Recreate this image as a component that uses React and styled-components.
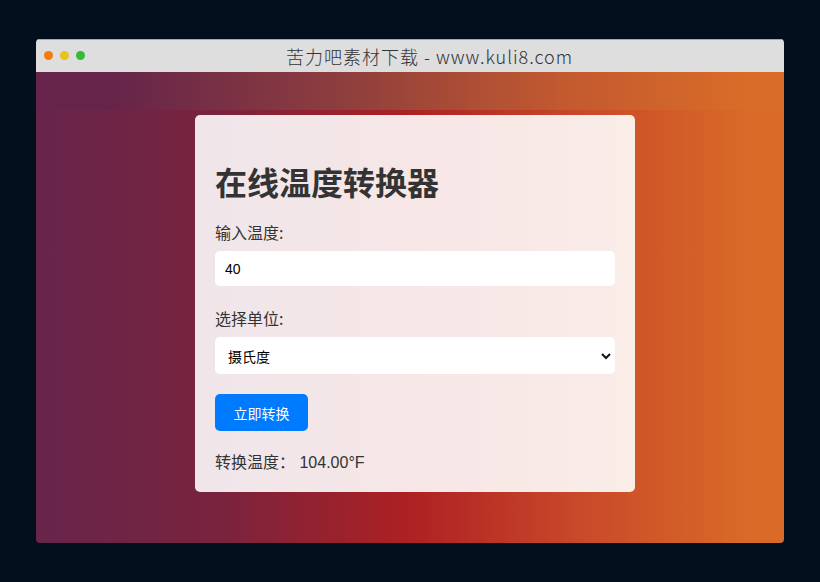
import React, { useState } from "react";
import styled, { createGlobalStyle } from "styled-components";

const GlobalStyle = createGlobalStyle`
  html, body {
    margin: 0;
    padding: 0;
    background: #030f1d;
  }
  body {
    width: 820px;
    height: 582px;
    overflow: hidden;
  }
`;

const Page = styled.div`
  padding: 39px 36px 0 36px;
`;

const Window = styled.div`
  display: flex;
  flex-direction: column;
  width: 748px;
  height: 504px;
  border-radius: 4px;
  overflow: hidden;
`;

const TitleBar = styled.div`
  position: relative;
  display: flex;
  align-items: center;
  justify-content: center;
  height: 33px;
  padding-left: 39px;
  background: #dedede;
  border-top: 1px solid #a5a9ae;
  box-sizing: border-box;
`;

const Dots = styled.div`
  position: absolute;
  left: 8px;
  top: 11px;
  display: flex;
  gap: 7px;
`;

const Dot = styled.span`
  width: 9px;
  height: 9px;
  border-radius: 50%;
  background: ${(props) => props.color};
`;

const TitleText = styled.div`
  font-family: "Noto Sans CJK SC", "Noto Sans", sans-serif;
  font-weight: 300;
  font-size: 18px;
  color: #333;
  letter-spacing: 1px;
`;

const Band = styled.div`
  height: 38px;
  background: linear-gradient(to right, #66244a 10%, #8c3d3e 40%, #c2592f 70%, #d96c28 95%);
`;

const Stage = styled.div`
  flex: 1;
  display: flex;
  justify-content: center;
  align-items: flex-start;
  padding: 5px 0 0 10px;
  background: linear-gradient(to right, #68254a 2%, #7a233e 25%, #ae2022 50%, #c8482a 72%, #d96a27 95%);
`;

const Card = styled.div`
  width: 440px;
  height: 377px;
  box-sizing: border-box;
  padding: 20px;
  border-radius: 5px;
  background: rgba(255, 255, 255, 0.89);
  font-family: "Liberation Sans", "Noto Sans CJK SC", sans-serif;
  color: #333;
`;

const Heading = styled.h2`
  margin: 24px 0 18px;
  font-size: 32px;
  line-height: 44px;
  font-weight: bold;
  font-family: "Noto Sans CJK SC", sans-serif;
  color: #333;
`;

const Label = styled.label`
  display: block;
  font-size: 16px;
  line-height: 22px;
  margin-top: ${(props) => props.gap || 0}px;
  margin-bottom: 8px;
  font-family: "Noto Sans CJK SC", sans-serif;
  font-weight: 400;
  color: #333;
`;

const Input = styled.input`
  display: block;
  width: 400px;
  height: 35px;
  box-sizing: border-box;
  padding: 0 10px;
  border: none;
  border-radius: 5px;
  background: #fff;
  font-family: "Liberation Sans", sans-serif;
  font-size: 14px;
  color: #000;
  outline: none;
`;

const SelectWrap = styled.div`
  position: relative;
  width: 400px;
  height: 37px;
`;

const Select = styled.select`
  width: 100%;
  height: 100%;
  box-sizing: border-box;
  padding: 0 13px;
  border: none;
  border-radius: 5px;
  background: #fff;
  appearance: none;
  font-family: "Noto Sans CJK SC", sans-serif;
  font-size: 14px;
  color: #000;
  outline: none;
`;

const Chevron = styled.svg`
  position: absolute;
  right: 4px;
  top: 15px;
  pointer-events: none;
`;

const Button = styled.button`
  display: block;
  margin-top: 20px;
  width: 93px;
  height: 37px;
  border: none;
  border-radius: 5px;
  background: #007bff;
  color: #fff;
  font-family: "Noto Sans CJK SC", sans-serif;
  font-size: 14px;
  cursor: pointer;
`;

const Result = styled.div`
  margin-top: 21px;
  font-size: 16px;
  line-height: 22px;
  font-family: "Liberation Sans", "Noto Sans CJK SC", sans-serif;
  color: #333;
`;

function App() {
  const [value, setValue] = useState("40");
  const [unit, setUnit] = useState("c");
  const [result, setResult] = useState("104.00°F");

  const convert = () => {
    const v = parseFloat(value);
    if (isNaN(v)) return;
    if (unit === "c") setResult(((v * 9) / 5 + 32).toFixed(2) + "°F");
    else setResult((((v - 32) * 5) / 9).toFixed(2) + "°C");
  };

  return (
    <>
      <GlobalStyle />
      <Page>
        <Window>
          <TitleBar>
            <Dots>
              <Dot color="#f57c0a" />
              <Dot color="#e8c31b" />
              <Dot color="#31bd34" />
            </Dots>
            <TitleText>苦力吧素材下载 - www.kuli8.com</TitleText>
          </TitleBar>
          <Band />
          <Stage>
            <Card>
              <Heading>在线温度转换器</Heading>
              <Label>输入温度:</Label>
              <Input value={value} onChange={(e) => setValue(e.target.value)} />
              <Label gap={21}>选择单位:</Label>
              <SelectWrap>
                <Select value={unit} onChange={(e) => setUnit(e.target.value)}>
                  <option value="c">摄氏度</option>
                  <option value="f">华氏度</option>
                </Select>
                <Chevron width="10" height="8" viewBox="0 0 10 8">
                  <path d="M1 2 L5 6 L9 2" fill="none" stroke="#111" strokeWidth="2" />
                </Chevron>
              </SelectWrap>
              <Button onClick={convert}>立即转换</Button>
              <Result>转换温度： {result}</Result>
            </Card>
          </Stage>
        </Window>
      </Page>
    </>
  );
}

export default App;
